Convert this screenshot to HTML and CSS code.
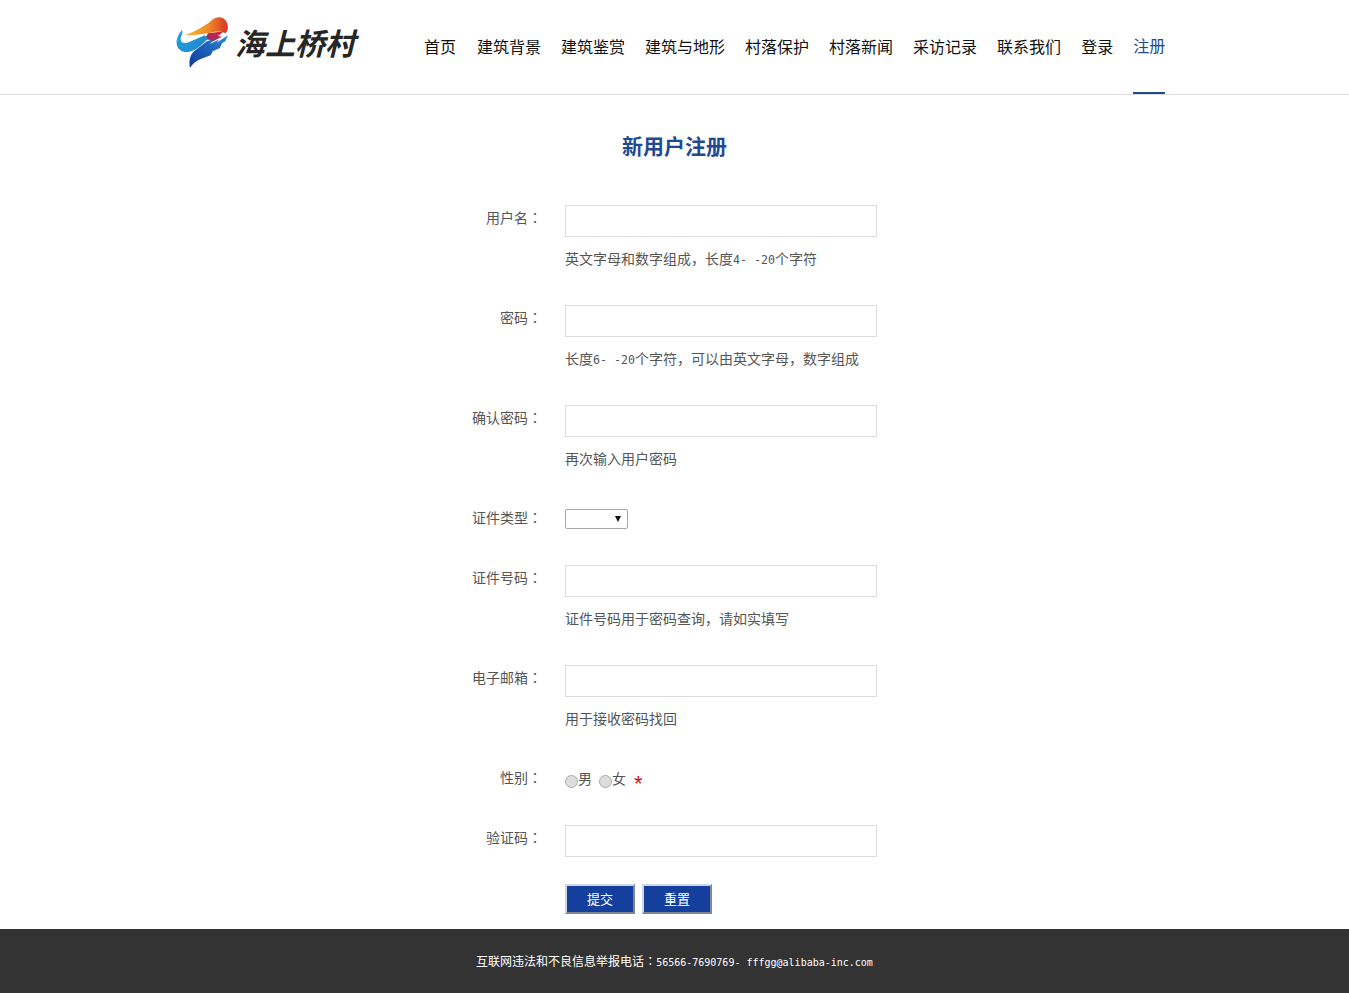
FILE: index.html
```html
<!DOCTYPE html>
<html lang="zh-CN">
<head>
<meta charset="utf-8">
<title>新用户注册</title>
<link rel="stylesheet" href="styles.css">
</head>
<body>
<header class="header">
  <a class="logo" href="#">
    <svg class="logo-mark" viewBox="12 12 156 156" width="52" height="52" aria-hidden="true">
      <defs>
        <linearGradient id="flame" x1="0" y1="0.5" x2="1" y2="0.5">
          <stop offset="0" stop-color="#f6b93a"/>
          <stop offset="0.55" stop-color="#f08a24"/>
          <stop offset="1" stop-color="#d8322a"/>
        </linearGradient>
        <linearGradient id="mid" x1="0.8" y1="0" x2="0.2" y2="1">
          <stop offset="0" stop-color="#d8282c"/>
          <stop offset="1" stop-color="#7a2d8c"/>
        </linearGradient>
        <linearGradient id="hook" x1="0" y1="0" x2="1" y2="0.6">
          <stop offset="0" stop-color="#23a5de"/>
          <stop offset="1" stop-color="#1f86d0"/>
        </linearGradient>
        <linearGradient id="ribbon" x1="1" y1="0" x2="0" y2="1">
          <stop offset="0" stop-color="#2c8fd6"/>
          <stop offset="0.5" stop-color="#1c5fb8"/>
          <stop offset="1" stop-color="#16389a"/>
        </linearGradient>
      </defs>
      <path fill="url(#flame)" d="M40 70C70 56 98 44 120 24C134 12 156 12 165 32C170 46 168 56 160 64C148 56 132 58 116 62C90 66 66 70 40 70Z"/>
      <path fill="url(#mid)" d="M108 64L156 58L138 72L150 74L100 100L116 84L98 82Z"/>
      <path fill="url(#hook)" d="M30 54C34 62 28 70 26 80C26 90 34 96 46 92C62 86 80 78 98 70L108 80C90 96 74 116 48 120C30 122 16 112 14 96C12 80 20 66 30 54Z"/>
      <path fill="url(#ribbon)" d="M104 88L126 82L114 96L142 82L134 92L168 70L160 88L150 94L144 108L122 118L116 130L88 140C72 146 62 154 54 168C50 148 54 130 66 118C80 108 92 98 104 88Z"/>
    </svg>
    <span class="logo-text">海上桥村</span>
  </a>
  <nav class="nav">
    <a class="nav-item nav-item-first" href="#">首页</a>
    <a class="nav-item" href="#">建筑背景</a>
    <a class="nav-item" href="#">建筑鉴赏</a>
    <a class="nav-item" href="#">建筑与地形</a>
    <a class="nav-item" href="#">村落保护</a>
    <a class="nav-item" href="#">村落新闻</a>
    <a class="nav-item" href="#">采访记录</a>
    <a class="nav-item" href="#">联系我们</a>
    <a class="nav-item" href="#">登录</a>
    <a class="nav-item nav-item-active" href="#">注册</a>
  </nav>
</header>

<main class="main">
  <h1 class="title">新用户注册</h1>
  <form class="form">
    <div class="row row-hint">
      <label class="label">用户名<span class="colon">：</span></label>
      <div class="field">
        <input class="input" type="text">
        <p class="hint">英文字母和数字组成，长度<span class="latin">4- -20</span>个字符</p>
      </div>
    </div>
    <div class="row row-hint">
      <label class="label">密码<span class="colon">：</span></label>
      <div class="field">
        <input class="input" type="password">
        <p class="hint">长度<span class="latin">6- -20</span>个字符，可以由英文字母，数字组成</p>
      </div>
    </div>
    <div class="row row-hint">
      <label class="label">确认密码<span class="colon">：</span></label>
      <div class="field">
        <input class="input" type="password">
        <p class="hint">再次输入用户密码</p>
      </div>
    </div>
    <div class="row row-plain">
      <label class="label">证件类型<span class="colon">：</span></label>
      <div class="field">
        <div class="select-wrap">
          <select class="select"><option></option></select>
          <span class="select-arrow"></span>
        </div>
      </div>
    </div>
    <div class="row row-hint">
      <label class="label">证件号码<span class="colon">：</span></label>
      <div class="field">
        <input class="input" type="text">
        <p class="hint">证件号码用于密码查询，请如实填写</p>
      </div>
    </div>
    <div class="row row-hint">
      <label class="label">电子邮箱<span class="colon">：</span></label>
      <div class="field">
        <input class="input" type="text">
        <p class="hint">用于接收密码找回</p>
      </div>
    </div>
    <div class="row row-plain">
      <label class="label">性别<span class="colon">：</span></label>
      <div class="field radios">
        <label class="radio"><input class="radio-input" type="radio" name="sex">男</label>
        <label class="radio"><input class="radio-input" type="radio" name="sex">女</label>
        <span class="required">*</span>
      </div>
    </div>
    <div class="row row-plain row-captcha">
      <label class="label">验证码<span class="colon">：</span></label>
      <div class="field">
        <input class="input" type="text">
      </div>
    </div>
    <div class="actions">
      <button class="btn" type="button">提交</button>
      <button class="btn" type="reset">重置</button>
    </div>
  </form>
</main>

<footer class="footer">互联网违法和不良信息举报电话<span class="colon">：</span><span class="latin-small">56566-7690769- fffgg@alibaba-inc.com</span></footer>
</body>
</html>
```

FILE: styles.css
```css
* {
  box-sizing: border-box;
}

html,
body {
  margin: 0;
  padding: 0;
}

body {
  background: #fff;
  color: #555;
  font-family: "Noto Sans CJK SC", "Liberation Sans", sans-serif;
  font-size: 14px;
}

a {
  text-decoration: none;
  color: inherit;
}

.header {
  display: flex;
  height: 95px;
  padding-left: 175px;
  border-bottom: 1px solid #ddd;
}

.logo {
  display: flex;
  align-items: center;
  width: 249px;
  height: 84px;
  padding-left: 1px;
}

.logo-mark {
  flex: none;
}

.logo-text {
  margin-left: 7px;
  color: #262626;
  font-size: 30px;
  line-height: 36px;
  font-weight: 700;
  font-style: italic;
  white-space: nowrap;
}

.nav {
  display: flex;
  gap: 20px;
}

.nav-item {
  height: 94px;
  color: #111;
  font-size: 16px;
  line-height: 92px;
  white-space: nowrap;
}

.nav-item-first {
  margin-right: 1px;
}

.nav-item-active {
  color: #1f4a8f;
  line-height: 90px;
  border-bottom: 2px solid #1f4a8f;
}

.main {
  height: 834px;
  padding-top: 38px;
}

.title {
  margin: 0 0 47px;
  color: #1f4a92;
  font-size: 21px;
  line-height: 25px;
  font-weight: 700;
  text-align: center;
}

.form {
  margin-left: 441px;
}

.row {
  display: flex;
}

.row-hint {
  height: 100px;
}

.row-plain {
  height: 60px;
}

.row-captcha {
  height: 59px;
}

.label {
  width: 101px;
  margin-right: 23px;
  color: #555;
  line-height: 24px;
  text-align: right;
}

.colon {
  font-family: "Noto Sans CJK TC", sans-serif;
  font-feature-settings: "locl" 0;
}

.input {
  display: block;
  width: 312px;
  height: 32px;
  margin: 0;
  border: 1px solid #ddd;
  background: #fff;
}

.hint {
  margin: 11px 0 0;
  color: #555;
  line-height: 20px;
}

.latin {
  font-family: "DejaVu Sans Mono", monospace;
  font-size: 11.6px;
}

.select-wrap {
  position: relative;
  width: 63px;
  height: 20px;
  margin-top: 4px;
}

.select {
  display: block;
  width: 100%;
  height: 100%;
  appearance: none;
  border: 1px solid #a6a6a6;
  border-radius: 2px;
  background: #fff;
}

.select-arrow {
  position: absolute;
  top: 7px;
  right: 7px;
  border-style: solid;
  border-width: 6px 3px 0;
  border-color: #111 transparent transparent;
}

.radios {
  display: flex;
  align-items: flex-start;
  gap: 7px;
  line-height: 26px;
}

.radio {
  display: flex;
  align-items: flex-start;
}

.radio-input {
  flex: none;
  width: 13px;
  height: 13px;
  margin: 10px 0 0;
  appearance: none;
  border: 1px solid #aaa;
  border-radius: 50%;
  background: #ddd;
}

.required {
  margin-top: 3px;
  margin-left: 1px;
  color: #d01010;
  font-family: "Liberation Sans", sans-serif;
  font-size: 22px;
  line-height: 32px;
}

.actions {
  display: flex;
  gap: 7px;
  margin-left: 124px;
}

.btn {
  width: 70px;
  height: 30px;
  margin: 0;
  padding: 0;
  border: 2px solid;
  border-color: #cfd6e4 #7f8791 #7f8791 #cfd6e4;
  background: #143f9c;
  color: #fff;
  font-family: inherit;
  font-size: 13px;
  line-height: 24px;
}

.footer {
  height: 64px;
  background: #333;
  color: #fff;
  font-size: 12px;
  line-height: 64px;
  text-align: center;
}

.latin-small {
  font-family: "DejaVu Sans Mono", monospace;
  font-size: 10px;
}
```
